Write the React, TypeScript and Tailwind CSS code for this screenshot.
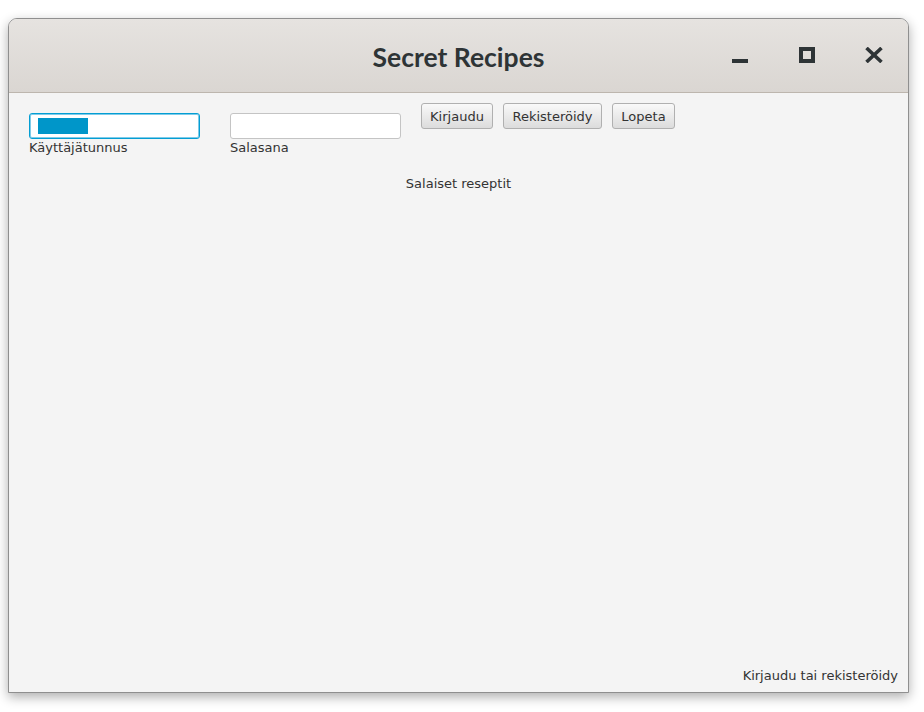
const ui = "font-['DejaVu_Sans',sans-serif] text-[13px] text-[#333333]";

const WinButton = ({ kind }: { kind: "min" | "max" | "close" }) => (
  <svg width="18" height="16" viewBox="0 0 18 16" className="text-[#2e3436]">
    {kind === "min" && <rect x="1" y="12" width="16" height="4" fill="currentColor" />}
    {kind === "max" && (
      <rect x="3" y="2" width="12" height="12" fill="none" stroke="currentColor" strokeWidth="4" />
    )}
    {kind === "close" && (
      <path d="M1.5 1 L16.5 15 M16.5 1 L1.5 15" stroke="currentColor" strokeWidth="3.6" strokeLinecap="butt" />
    )}
  </svg>
);

const Button = ({ label, w }: { label: string; w: string }) => (
  <button
    className={`${w} h-[26px] rounded-[3px] border border-[#b0b0b0] bg-gradient-to-b from-[#f9f9f9] to-[#dcdcdc] ${ui} leading-none`}
  >
    {label}
  </button>
);

export default function App() {
  return (
    <div className="w-[924px] h-[712px] bg-white pt-[18px] pl-[8px]">
      <div className="w-[901px] h-[675px] flex flex-col rounded-t-[9px] border border-[#8f8f8f] bg-[#f4f4f4] shadow-[0_4px_12px_rgba(0,0,0,0.32)] overflow-hidden">
        {/* title bar */}
        <div className="h-[74px] shrink-0 relative flex items-center justify-center bg-gradient-to-b from-[#e6e3e0] to-[#dad6d2] border-b border-[#bdb6ae]">
          <span className="font-['Lato',sans-serif] font-bold text-[26.5px] text-[#2e3436] mt-[5px]">
            Secret Recipes
          </span>
          <div className="absolute right-[25px] top-[28px] flex items-center gap-[49px]">
            <span className="pl-[2px]">
              <WinButton kind="min" />
            </span>
            <WinButton kind="max" />
            <WinButton kind="close" />
          </div>
        </div>

        {/* content */}
        <div className="flex-1 flex flex-col px-[20px] pt-[10px] pb-[7px]">
          <div className="flex items-start">
            <div className="mt-[10px] flex flex-col">
              <div className="w-[171px] h-[26px] rounded-[3px] border border-[#039ed3] bg-white shadow-[inset_0_0_0_1px_#7fcbe9] flex items-center pl-[8px]">
                <div className="w-[50px] h-[16px] bg-[#0096c9]" />
              </div>
              <span className={`${ui} -mt-[1px]`}>Käyttäjätunnus</span>
            </div>
            <div className="mt-[10px] ml-[30px] flex flex-col">
              <div className="w-[171px] h-[26px] rounded-[3px] border border-[#c4c4c4] bg-white" />
              <span className={`${ui} -mt-[1px]`}>Salasana</span>
            </div>
            <div className="ml-[20px] flex gap-[10px]">
              <Button label="Kirjaudu" w="w-[72px]" />
              <Button label="Rekisteröidy" w="w-[99px]" />
              <Button label="Lopeta" w="w-[63px]" />
            </div>
          </div>
          <div className={`${ui} text-center mt-[16px]`}>Salaiset reseptit</div>
          <div className="flex-1" />
          <div className={`${ui} text-right -mr-[10px]`}>Kirjaudu tai rekisteröidy</div>
        </div>
      </div>
    </div>
  );
}
